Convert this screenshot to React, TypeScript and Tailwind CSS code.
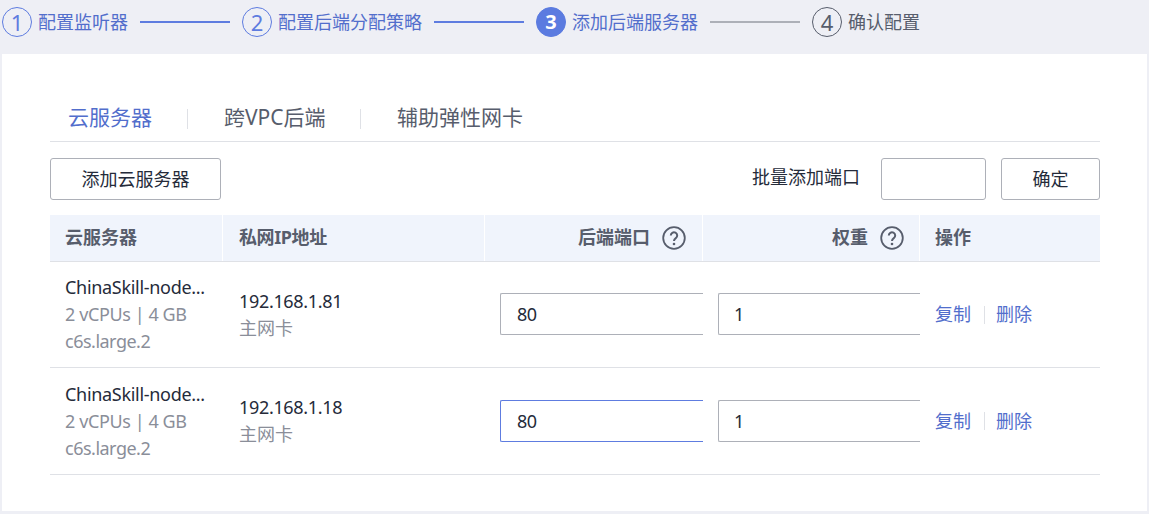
const FONT = "font-['Noto_Sans','Noto_Sans_CJK_SC',sans-serif]";
const COLS = "grid grid-cols-[173px_262px_218px_217px_180px]";

const steps = [
  { n: "1", label: "配置监听器", state: "done" },
  { n: "2", label: "配置后端分配策略", state: "done" },
  { n: "3", label: "添加后端服务器", state: "active" },
  { n: "4", label: "确认配置", state: "todo" },
];

function Step({ n, label, state, last }: { n: string; label: string; state: string; last: boolean }) {
  const circle =
    state === "active"
      ? "bg-[#5b7be0] border-[#5b7be0] text-white font-bold text-[20px]"
      : state === "done"
        ? "border-[#5e7ce0] text-[#5e7ce0] text-[22px]"
        : "border-[#575d6c] text-[#575d6c] text-[22px]";
  return (
    <>
      <div className={`w-[30px] h-[30px] rounded-full border flex items-center justify-center shrink-0 ${circle}`}>{n}</div>
      <span className={`ml-[6px] text-[18px] leading-[30px] whitespace-nowrap ${state === "todo" ? "text-[#575d6c]" : "text-[#526ecc]"}`}>{label}</span>
      {!last && <div className={`w-[90px] h-[2px] mx-[12px] ${state === "active" ? "bg-[#adb0b8]" : "bg-[#5e7ce0]"}`} />}
    </>
  );
}

function HelpIcon() {
  return (
    <svg width="24" height="24" viewBox="0 0 24 24" fill="none" className="shrink-0">
      <circle cx="12" cy="12" r="10.8" stroke="#575d6c" strokeWidth="1.8" />
      <path d="M8.8 9.6a3.2 3.2 0 1 1 5 2.6c-1.2.8-1.8 1.4-1.8 2.8" stroke="#575d6c" strokeWidth="2" fill="none" />
      <circle cx="12" cy="18" r="1.3" fill="#575d6c" />
    </svg>
  );
}

function Row({ ip, focus, height, nudge }: { ip: string; focus?: boolean; height: string; nudge?: string }) {
  return (
    <div className={`${COLS} ${height} border-b border-[#dfe1e6] items-center text-[18px]`}>
      <div className="pl-[15px] leading-[27px] tracking-[-0.3px]">
        <div className="text-[#252b3a] whitespace-nowrap">ChinaSkill-node...</div>
        <div className="text-[#8a8e99] tracking-[-0.4px]">2 vCPUs | 4 GB</div>
        <div className="text-[#8a8e99] tracking-[-0.5px]">c6s.large.2</div>
      </div>
      <div className="pl-[16px] leading-[27px]">
        <div className="text-[#252b3a] tracking-[-0.33px]">{ip}</div>
        <div className="text-[#8a8e99]">主网卡</div>
      </div>
      <div className={`pl-[15px] ${nudge ?? ""}`}>
        <div className={`h-[42px] border border-r-0 rounded-l-[2px] pl-[16px] flex items-center text-[#252b3a] tracking-[-0.5px] ${focus ? "border-[#5e7ce0]" : "border-[#adb0b8]"}`}>80</div>
      </div>
      <div className={`pl-[15px] ${nudge ?? ""}`}>
        <div className="h-[42px] border border-r-0 border-[#adb0b8] rounded-l-[2px] pl-[15px] flex items-center text-[#252b3a]">1</div>
      </div>
      <div className="pl-[15px] flex items-center text-[#526ecc]">
        <span>复制</span>
        <span className="w-px h-[18px] bg-[#dfe1e6] ml-[13px] mr-[11px]" />
        <span>删除</span>
      </div>
    </div>
  );
}

export default function App() {
  return (
    <div className={`w-[1149px] h-[514px] bg-[#eeeff5] overflow-hidden ${FONT}`}>
      <div className="h-[54px] flex items-center pl-[2px] pb-[10px]">
        {steps.map((s, i) => (
          <Step key={s.n} n={s.n} label={s.label} state={s.state} last={i === steps.length - 1} />
        ))}
      </div>

      <div className="ml-[2px] mr-[2px] h-[457px] bg-white pl-[48px] pr-[47px] pt-[43px]">
        {/* tabs */}
        <div className="h-[45px] border-b border-[#dfe1e6] flex items-start pl-[18px] pt-[2px] text-[21px] leading-[36px] text-[#575d6c]">
          <span className="text-[#526ecc]">云服务器</span>
          <span className="w-px h-[20px] bg-[#dfe1e6] ml-[35px] mr-[36px] mt-[10px]" />
          <span className="w-[101px] whitespace-nowrap">跨VPC后端</span>
          <span className="w-px h-[20px] bg-[#dfe1e6] ml-[35px] mr-[36px] mt-[10px]" />
          <span>辅助弹性网卡</span>
        </div>

        {/* toolbar */}
        <div className="mt-[16px] flex items-center text-[18px] text-[#252b3a]">
          <button className="w-[171px] h-[42px] border border-[#adb0b8] rounded-[3px]">添加云服务器</button>
          <span className="ml-auto pb-[3px]">批量添加端口</span>
          <div className="w-[105px] h-[42px] border border-[#adb0b8] rounded-[3px] ml-[21px]" />
          <button className="w-[99px] h-[42px] border border-[#adb0b8] rounded-[3px] ml-[15px]">确定</button>
        </div>

        {/* table */}
        <div className="mt-[15px]">
          <div className={`${COLS} h-[47px] bg-[#f0f4fc] border-b border-[#dfe1e6] text-[18px] font-bold text-[#575d6c]`}>
            <div className="pl-[15px] pb-[2px] flex items-center border-r border-white">云服务器</div>
            <div className="pl-[16px] pb-[2px] flex items-center border-r border-white tracking-[-0.4px]">私网IP地址</div>
            <div className="pr-[16px] flex items-center justify-end gap-[12px] border-r border-white"><span className="mb-[2px]">后端端口</span><HelpIcon /></div>
            <div className="pr-[15px] flex items-center justify-end gap-[12px] border-r border-white"><span className="mb-[2px]">权重</span><HelpIcon /></div>
            <div className="pl-[15px] pb-[2px] flex items-center">操作</div>
          </div>
          <Row ip="192.168.1.81" height="h-[106px]" nudge="mb-[1px]" />
          <Row ip="192.168.1.18" height="h-[107px]" focus />
        </div>
      </div>
    </div>
  );
}
